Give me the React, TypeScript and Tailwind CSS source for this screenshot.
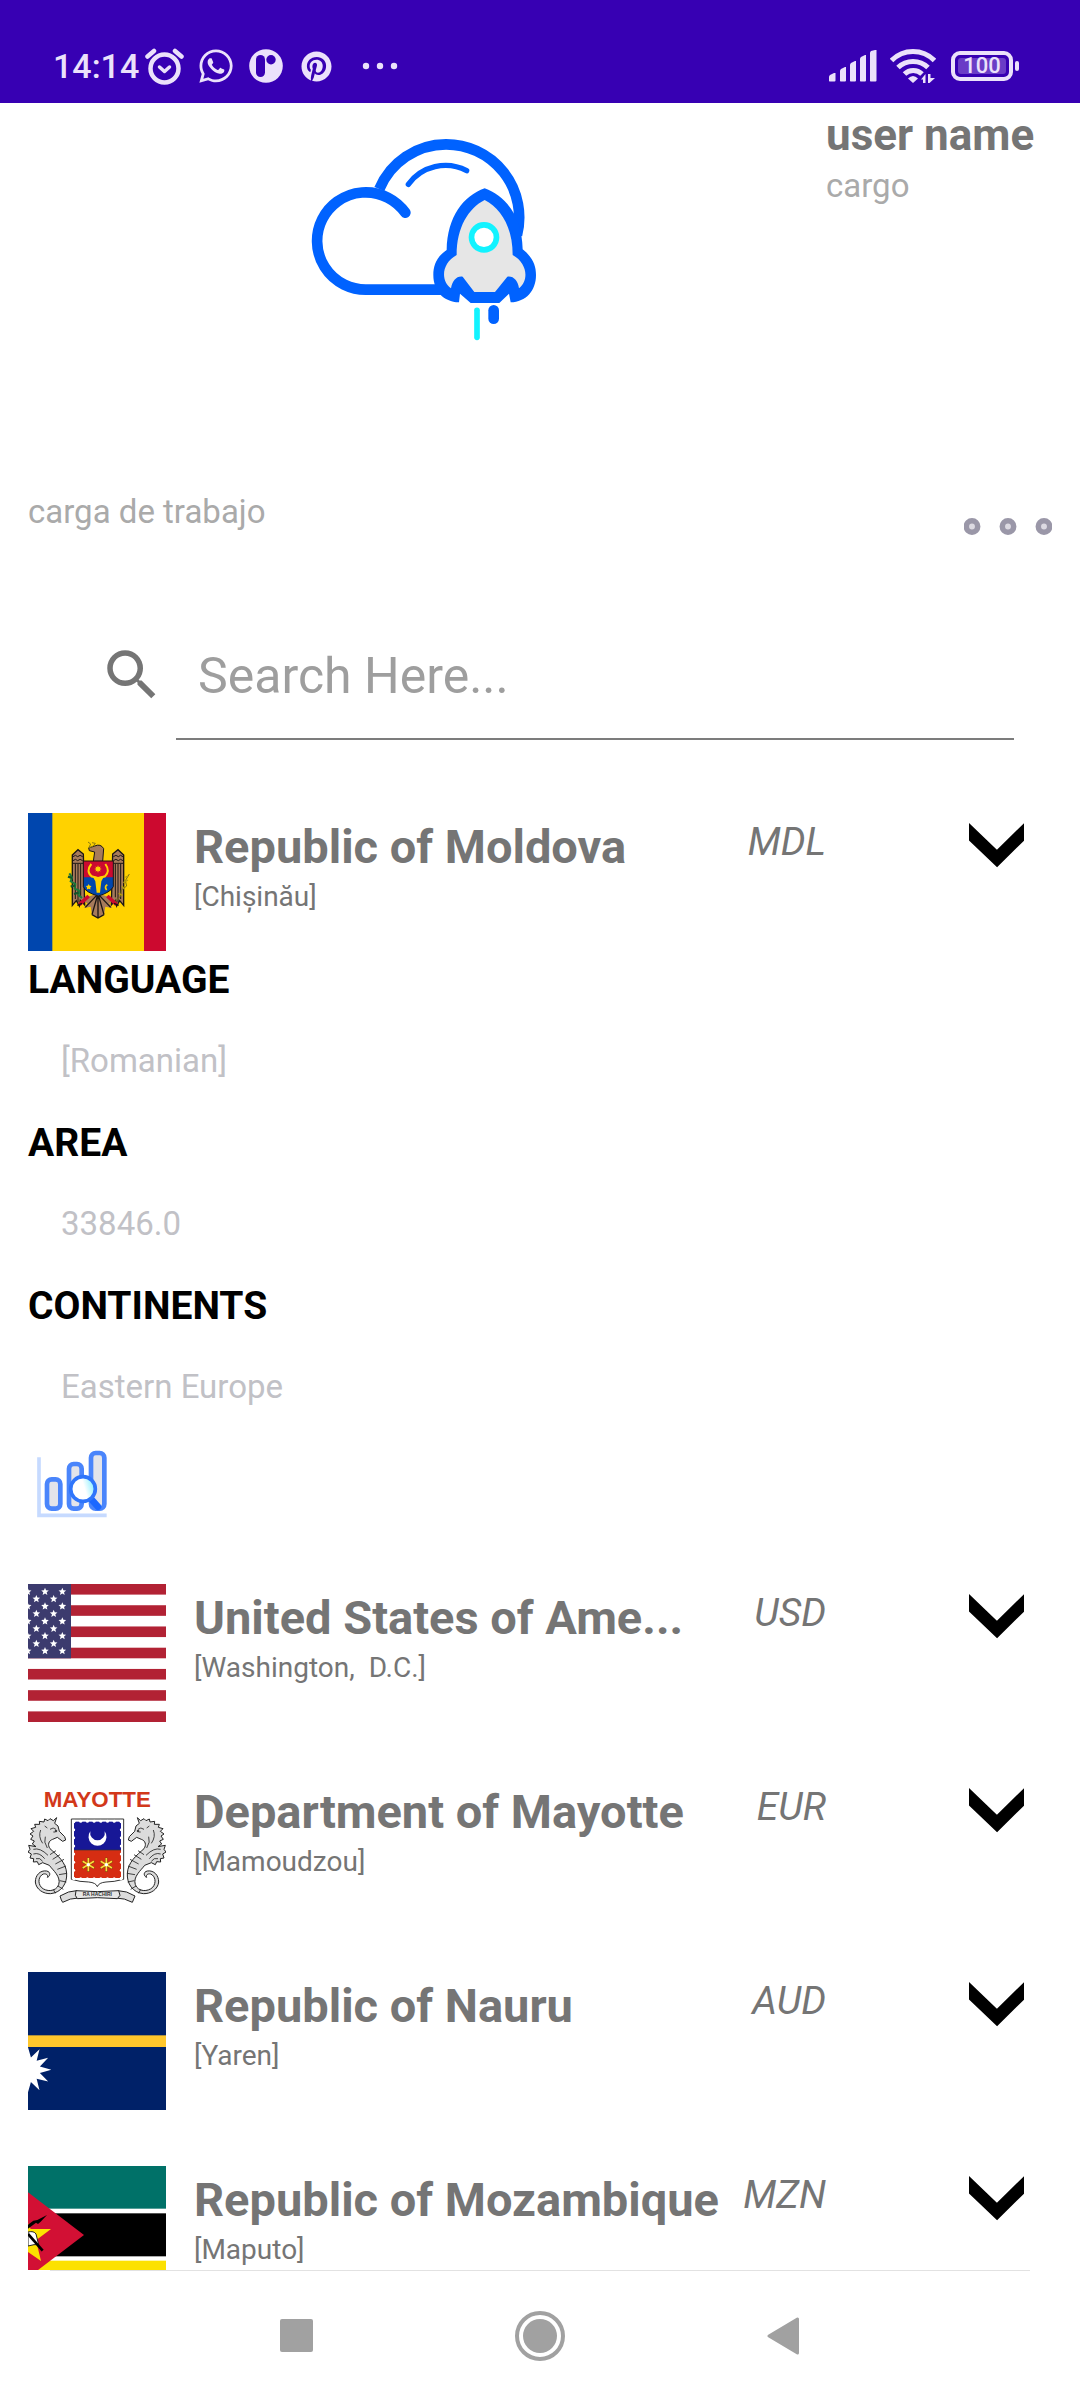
import React, { useState } from "react";
import { FaPinterest, FaWhatsapp } from "react-icons/fa";

const starPath = (cx: number, cy: number, outer: number, inner: number, points: number, startDeg = -90) => {
  const pts: string[] = [];
  for (let i = 0; i < points * 2; i++) {
    const r = i % 2 === 0 ? outer : inner;
    const a = ((startDeg + (i * 180) / points) * Math.PI) / 180;
    pts.push(`${(cx + r * Math.cos(a)).toFixed(1)} ${(cy + r * Math.sin(a)).toFixed(1)}`);
  }
  return `M${pts.join("L")}Z`;
};

function AlarmIcon() {
  return (
    <svg viewBox="0 0 39 37" className="h-[37px] w-[39px]" fill="none" stroke="currentColor" strokeLinecap="round" aria-hidden="true">
      <circle cx="19.500" cy="20.500" r="14" strokeWidth="4.500" />
      <path d="M2.500 8.500L9 3M36.500 8.500L30 3" strokeWidth="4.500" />
      <path d="M14.500 19l5 4.500 5-4.500" strokeWidth="3.500" strokeLinejoin="round" />
    </svg>
  );
}

function RoundAppIcon() {
  return (
    <svg viewBox="0 0 34 34" className="size-[34px]" aria-hidden="true">
      <circle cx="17" cy="17" r="16.800" fill="currentColor" />
      <rect x="7" y="6" width="9" height="22" rx="4.500" fill="#3700b3" />
      <circle cx="22" cy="10.800" r="4.700" fill="#3700b3" />
    </svg>
  );
}

function SignalIcon() {
  return (
    <svg viewBox="0 0 48 32" className="h-8 w-12" fill="currentColor" aria-hidden="true">
      <path d="M0 31V27q0-1 1-2L5 23h1.500v7.500q0 1-1 1H.5zM11 31V21q0-1 1-2l4-2h1v13.500q0 1-1 1h-4.500zM21 31V15q0-1 1-2l4-2h1v19.500q0 1-1 1h-4.500zM31 31V9q0-1 1-2l4-2h1v25.500q0 1-1 1h-4.500zM41 31V3q0-1 1-2l4-1h1.500v30.500q0 1-1 1h-5z" />
    </svg>
  );
}

function WifiIcon() {
  return (
    <svg viewBox="0 0 46 36" className="h-9 w-[46px]" fill="none" stroke="currentColor" strokeWidth="5" aria-hidden="true">
      <path d="M1.500 12.500a30 30 0 0 1 43 0" />
      <path d="M8 19.500a21.500 21.500 0 0 1 30 0" />
      <path d="M14.500 26a12.500 12.500 0 0 1 17.500 0" />
      <path d="M18 30.500q5-5 10 0l-5 4.500z" fill="currentColor" stroke="none" />
      <path d="M35.500 35v-9l-4.500 5.500h2V35zM38 35v-9h2.500v4h4.500L39.500 35z" fill="currentColor" stroke="none" />
    </svg>
  );
}

function Logo() {
  return (
    <svg viewBox="66 54 675 606" className="h-[202px] w-[225px] shrink-0 overflow-visible" fill="none" role="img" aria-label="Cloud rocket">
      <g stroke="#0062ff" strokeWidth="32">
        <path d="M268 207A217 217 0 0 1 468 73A219 219 0 0 1 681 345" />
        <path d="M450 509H230A146 146 0 1 1 346 278" strokeLinecap="round" />
        <path d="M355 193A138 138 0 0 1 530 152" strokeWidth="16" strokeLinecap="round" />
      </g>
      <path d="M584 205C520 228 472 290 470 390C440 410 430 436 430 465C430 512 460 546 507 547L510 521L542 549H628L657 521L662 547C708 546 738 512 738 465C738 436 728 412 698 388C696 290 648 228 584 205Z" fill="#0062ff" />
      <path d="M584 240C535 265 500 322 500 405C455 430 451 482 483 505C487 482 500 467 518 470L553 516H615L652 470C670 467 684 482 687 505C717 482 713 430 668 405C668 322 633 265 584 240Z" fill="#e6e6e6" />
      <circle cx="582" cy="352" r="37.500" fill="#fff" stroke="#12f3ff" strokeWidth="17" />
      <path d="M561 571V652" stroke="#12f3ff" strokeWidth="17" strokeLinecap="round" />
      <path d="M611 571V596" stroke="#0062ff" strokeWidth="32" strokeLinecap="round" />
    </svg>
  );
}

function ChartIcon() {
  return (
    <svg viewBox="108 90 216 204" className="h-[68px] w-[72px]" fill="none" aria-hidden="true">
      <defs>
        <linearGradient id="lens" x1="0" x2="1" y1="0.600" y2="0.300">
          <stop offset="0.550" stopColor="#fff" />
          <stop offset="1" stopColor="#7eeeff" />
        </linearGradient>
      </defs>
      <path d="M117 112V286H320" stroke="#c6daff" strokeWidth="11" />
      <g fill="#e3e4ea" stroke="#4a85fb" strokeWidth="14">
        <rect x="141" y="178" width="40" height="88" rx="14" />
        <rect x="207" y="132" width="38" height="134" rx="14" />
        <rect x="273" y="99" width="40" height="167" rx="14" />
      </g>
      <path d="M276 240L294 260" stroke="#1c68ff" strokeWidth="20" strokeLinecap="round" />
      <circle cx="249" cy="207" r="37" fill="url(#lens)" stroke="#2f75fb" strokeWidth="11" />
    </svg>
  );
}

const flagClass = "size-[138px] shrink-0";

function MoldovaFlag() {
  const wing = (
    <g>
      <path d="M217 195L234 179L250 192L254 345L241 330L238 348L229 332L217 346Z" fill="#a77b5b" stroke="#1c1714" strokeWidth="4" />
      <path d="M219 200q8-8 14 0 7-8 15 0M219 212q8-8 14 0 7-8 15 0M219 220h30M226 222v105M234 222v115M242 222v100" stroke="#1c1714" strokeWidth="3" fill="none" />
    </g>
  );
  return (
    <svg viewBox="84 69 414 414" className={flagClass} role="img" aria-label="Flag of Moldova">
      <rect x="84" y="69" width="414" height="414" fill="#ffd200" />
      <rect x="84" y="69" width="73" height="414" fill="#0046ae" />
      <rect x="432" y="69" width="66" height="414" fill="#cc092f" />
      {wing}
      <g transform="translate(588 0) scale(-1 1)">{wing}</g>
      <path d="M290 312L240 328L262 340L252 354L272 350L276 374L294 384L312 374L316 350L336 354L328 340L348 328L298 312Z" fill="#a77b5b" />
      <path d="M290 316L256 352M292 318L276 374M294 318V384M296 318L312 374M298 316L332 352M276 374L294 384L312 374" stroke="#1c1714" strokeWidth="4" fill="none" />
      <path d="M238 344L266 318M350 344L322 318" stroke="#cc092f" strokeWidth="11" />
      <path d="M232 346l14-6M356 346l-14-6" stroke="#1c1714" strokeWidth="4" />
      <path d="M280 214L284 186L268 182L266 174L284 168Q302 160 311 176L308 214Z" fill="#a77b5b" stroke="#1c1714" strokeWidth="3" />
      <path d="M264 156l8 6-6 12 14-6 6-8-10-2" stroke="#8a7a10" strokeWidth="3" fill="none" />
      <path d="M250 213H340V264H250Z" fill="#cc092f" />
      <path d="M250 262H340V290Q330 308 295 318Q258 308 250 290Z" fill="#0046ae" />
      <path d="M250 213H340V290Q330 308 295 318Q258 308 250 290Z" fill="none" stroke="#1c1714" strokeWidth="3" />
      <path d="M274 222Q256 244 276 260L294 264L314 260Q332 244 316 222" fill="none" stroke="#ffd200" strokeWidth="6" />
      <path d="M276 256L294 262L314 256L304 274L300 308H290L286 274Z" fill="#ffd200" />
      <path d={starPath(294, 237, 11, 6, 8)} fill="#ffd200" />
      <path d={starPath(266, 291, 9, 5, 5)} fill="#ffd200" />
      <path d="M322 284q-10 6-2 16" stroke="#ffd200" strokeWidth="5" fill="none" />
      <path d="M208 250l8 12-4 12 14 8-2 14 14 6-2 14 10 8" stroke="#1c7a3c" strokeWidth="6" fill="none" />
      <path d="M204 260l12 4M212 290l14-4M222 312l14-4" stroke="#14552b" strokeWidth="7" />
      <path d="M388 252L376 272L380 288L364 300L362 318L346 334" stroke="#7d7413" strokeWidth="3" fill="none" />
      <path d="M384 258l-8 4M384 270l-14 8M374 298l-8-10M368 316l-12-6" stroke="#b59d12" strokeWidth="4" />
    </svg>
  );
}

function UsaFlag() {
  const wide = [94, 138, 183, 227, 272];
  const narrow = [116, 160, 205, 250];
  return (
    <svg viewBox="84 72 414 414" className={flagClass} role="img" aria-label="Flag of the United States">
      <rect x="84" y="72" width="414" height="414" fill="#fff" />
      {[0, 1, 2, 3, 4, 5, 6].map((i) => (
        <rect key={i} x="84" y={72 + i * 63.7} width="414" height="31.800" fill="#b22234" />
      ))}
      <rect x="84" y="72" width="129" height="223" fill="#3c3b6e" />
      {wide.map((y) => [83, 135, 187].map((x) => <path key={`${x}-${y}`} d={starPath(x, y + 1, 12, 5.4, 5)} fill="#fff" />))}
      {narrow.map((y) => [109, 161].map((x) => <path key={`${x}-${y}`} d={starPath(x, y + 1, 12, 5.4, 5)} fill="#fff" />))}
    </svg>
  );
}

function MayotteFlag() {
  const seahorse = (
    <g stroke="#222" strokeLinejoin="round">
      <path
        d="M170 143L160 152L150 146L144 152L134 147L132 156L118 154L119 163L104 163L107 172L93 176L101 184L90 192L99 198L92 208L103 213L97 222L108 230L86 226L90 238L84 246L94 252L90 264L101 266L100 276L112 275L116 284L128 278L148 286C158 300 184 320 176 344C168 366 138 366 124 352C112 338 116 318 130 312C140 310 145 316 142 322C150 320 154 306 140 303C120 300 106 316 106 336C108 358 130 372 152 371C184 368 202 340 200 310C198 276 172 256 150 236C142 224 146 212 158 208L172 202L188 214L197 210L194 200L178 184L174 168L164 160Z"
        fill="#dcdcdc"
        strokeWidth="3"
      />
      <path d="M150 178q10-8 18 0M160 186h6M134 168l8 6M122 180q-8 20 6 40M136 200q-6 16 6 34M100 238q20-6 44 18M100 252q18-6 34 14M108 266q12-4 20 8M150 254l18-12M158 268l22-14M166 282l26-14M172 298l26-10M177 314l24-4M179 332l20 4M174 348l16 10M160 358l6 12" fill="none" strokeWidth="2.500" />
      <circle cx="168" cy="183" r="3" fill="#222" />
    </g>
  );
  const scallops = [0, 1, 2, 3, 4, 5, 6, 7];
  return (
    <svg viewBox="84 24 414 414" className={flagClass} role="img" aria-label="Flag of Mayotte">
      <rect x="84" y="24" width="414" height="414" fill="#fff" />
      <text x="292" y="110" textAnchor="middle" fontFamily="Liberation Sans, Arial, sans-serif" fontWeight="700" fontSize="67" fill="#d2381a">
        MAYOTTE
      </text>
      {seahorse}
      <g transform="translate(582 0) scale(-1 1)">{seahorse}</g>
      <path d="M214 147H371V328Q340 336 318 336Q296 338 292 350Q288 338 266 336Q240 336 214 328Z" fill="#fff" stroke="#333" strokeWidth="3" />
      <rect x="222" y="155" width="141" height="85" fill="#171796" />
      <rect x="222" y="240" width="141" height="84" fill="#d62d12" />
      <path d="M222 240H363" stroke="#333" strokeWidth="2" />
      {scallops.map((i) => (
        <g key={i} fill="#fff">
          <circle cx={222 + i * 20.1} cy="154" r="4.500" />
          <circle cx={222 + i * 20.1} cy="326" r="4.500" />
          <circle cx="221" cy={155 + i * 24.3} r="4.500" />
          <circle cx="364" cy={155 + i * 24.3} r="4.500" />
        </g>
      ))}
      <path d="M271 184A27 27 0 1 0 314 184A22 22 0 1 1 271 184Z" fill="#fff" />
      {[265, 319].map((x) => (
        <g key={x}>
          <path d="M0-21V21M-18-10.500L18 10.500M-18 10.500L18-10.500" transform={`translate(${x} 284)`} stroke="#6b4a08" strokeWidth="7" />
          <path d="M0-20V20M-17-10L17 10M-17 10L17-10" transform={`translate(${x} 284)`} stroke="#ffd83a" strokeWidth="5" />
          <circle cx={x} cy="284" r="5" fill="#fff" />
        </g>
      ))}
      <path d="M180 378Q206 362 230 362L236 384Q210 384 188 397L184 390ZM405 378Q380 362 354 362L348 384Q374 384 397 397L400 390Z" fill="#dcdcdc" stroke="#222" strokeWidth="3" />
      <path d="M228 362Q292 368 356 362L360 376L352 386Q292 380 232 386L226 376Z" fill="#e6e6e6" stroke="#222" strokeWidth="3" />
      <text x="292" y="379" textAnchor="middle" fontFamily="Liberation Sans, Arial, sans-serif" fontSize="15" fontWeight="700" fill="#333">
        RA HACHIRI
      </text>
    </svg>
  );
}

function NauruFlag() {
  return (
    <svg viewBox="84 66 414 414" className={flagClass} role="img" aria-label="Flag of Nauru">
      <rect x="84" y="66" width="414" height="414" fill="#002168" />
      <rect x="84" y="256" width="414" height="35" fill="#ffc72c" />
      <path d={starPath(83, 359, 71, 38, 12)} fill="#fff" />
    </svg>
  );
}

function MozambiqueFlag() {
  return (
    <svg viewBox="84 648 414 414" className={flagClass} role="img" aria-label="Flag of Mozambique">
      <rect x="84" y="648" width="414" height="414" fill="#fff" />
      <rect x="84" y="648" width="414" height="128" fill="#007168" />
      <rect x="84" y="790" width="414" height="129" fill="#000" />
      <rect x="84" y="932" width="414" height="130" fill="#fce100" />
      <path d="M84 727L252 855L84 983Z" fill="#d21034" />
      <path d="M84 820L92 837H153L108 871L123 933L84 906Z" fill="#fce100" />
      <path d="M84 846Q102 842 108 852L116 884Q104 882 84 888Z" fill="#fff" stroke="#222" strokeWidth="3" />
      <path d="M84 852L128 902" stroke="#000" strokeWidth="8" />
      <path d="M84 824L100 812L112 810L141 795L122 815L114 822L108 818L84 836Z" fill="#000" />
    </svg>
  );
}

type Country = { name: string; capital: string; currency: string; Flag: () => React.JSX.Element };

const countries: Country[] = [
  { name: "Republic of Moldova", capital: "[Chișinău]", currency: "MDL", Flag: MoldovaFlag },
  { name: "United States of Ame...", capital: "[Washington,  D.C.]", currency: "USD", Flag: UsaFlag },
  { name: "Department of Mayotte", capital: "[Mamoudzou]", currency: "EUR", Flag: MayotteFlag },
  { name: "Republic of Nauru", capital: "[Yaren]", currency: "AUD", Flag: NauruFlag },
  { name: "Republic of Mozambique", capital: "[Maputo]", currency: "MZN", Flag: MozambiqueFlag },
];

const details = [
  { label: "LANGUAGE", value: "[Romanian]" },
  { label: "AREA", value: "33846.0" },
  { label: "CONTINENTS", value: "Eastern Europe" },
];

function StatusBar() {
  return (
    <div className="flex h-[103px] shrink-0 items-end justify-between bg-[#3700b3] pr-[61px] pb-[18px] pl-[53px] text-[#ebe1fb]">
      <div className="flex h-[38px] items-center">
        <span className="w-[92px] text-[34px] leading-[38px] font-medium">14:14</span>
        <AlarmIcon />
        <FaWhatsapp className="ml-[13px] size-[38px]" />
        <span className="ml-3.5">
          <RoundAppIcon />
        </span>
        <FaPinterest className="ml-[18px] size-[31px]" />
        <svg viewBox="0 0 36 8" className="ml-[30px] h-2 w-9" fill="currentColor" aria-hidden="true">
          <circle cx="4" cy="4" r="3.200" />
          <circle cx="18" cy="4" r="3.200" />
          <circle cx="32" cy="4" r="3.200" />
        </svg>
      </div>
      <div className="flex h-[38px] items-center">
        <SignalIcon />
        <span className="ml-[13px]">
          <WifiIcon />
        </span>
        <span className="ml-[15px] flex h-[30px] w-[62px] items-center rounded-[9px] border-4 border-current p-[3px]">
          <span className="flex h-4 w-full items-center justify-center rounded-[3px] bg-[#6a3cc6] text-[22px] leading-4 font-medium">100</span>
        </span>
        <span className="ml-0.5 h-2.5 w-1 rounded-[2px] bg-current" />
      </div>
    </div>
  );
}

function CountryRow({ country, open, onToggle }: { country: Country; open: boolean; onToggle: () => void }) {
  const { Flag } = country;
  return (
    <div className="flex items-start pr-14 pl-7">
      <Flag />
      <div className="ml-7 min-w-0 flex-1 pt-[7px]">
        <h2 className="text-[47px] leading-[54px] font-bold whitespace-nowrap">{country.name}</h2>
        <p className="mt-1.5 text-[28px] leading-[34px] whitespace-pre">{country.capital}</p>
      </div>
      <span className="pt-1.5 text-[39px] leading-[46px] italic">{country.currency}</span>
      <button type="button" onClick={onToggle} aria-expanded={open} aria-label={`Details of ${country.name}`} className="mt-2 ml-[143px] shrink-0">
        <svg viewBox="0 0 55 48" className="h-12 w-[55px]" aria-hidden="true">
          <path d="M-6 5L28 37.500L61 5" fill="none" stroke="#000" strokeWidth="12.500" />
        </svg>
      </button>
    </div>
  );
}

function CountryDetails() {
  return (
    <div className="pt-1.5 pb-2.5 pl-7">
      <dl>
        {details.map((d) => (
          <div key={d.label} className="mb-[39px]">
            <dt className="text-[39px] leading-[46px] font-bold text-black">{d.label}</dt>
            <dd className="mt-[38px] ml-[33px] text-[33px] leading-10 text-[#c1c1c6]">{d.value}</dd>
          </div>
        ))}
      </dl>
      <button type="button" aria-label="Statistics" className="mt-[43px] ml-2 block">
        <ChartIcon />
      </button>
    </div>
  );
}

export default function App() {
  const [openIndex, setOpenIndex] = useState<number | null>(0);
  const [query, setQuery] = useState("");
  return (
    <div className="flex h-screen flex-col overflow-hidden bg-white font-[Roboto,sans-serif] text-[#757575]">
      <StatusBar />
      <header className="flex items-start justify-between pt-1.5 pr-11">
        <div className="flex flex-1 justify-center pt-[29px] pl-[22px]">
          <Logo />
        </div>
        <div className="w-[210px]">
          <h1 className="text-[44px] leading-[52px] font-bold whitespace-nowrap">user name</h1>
          <p className="mt-[5px] text-[33px] leading-10 text-[#aaa]">cargo</p>
        </div>
      </header>

      <div className="mt-[152px] flex items-start justify-between px-7">
        <p className="text-[33px] leading-10 text-[#aaa]">carga de trabajo</p>
        <button type="button" aria-label="More options" className="mt-[26px]">
          <svg viewBox="0 0 88 17" className="h-[17px] w-[88px]" fill="#dcdae2" stroke="#9a97a8" strokeWidth="5.500" aria-hidden="true">
            <circle cx="8" cy="8.500" r="5.700" />
            <circle cx="44" cy="8.500" r="5.700" />
            <circle cx="80" cy="8.500" r="5.700" />
          </svg>
        </button>
      </div>

      <label className="mt-[107px] mr-[66px] ml-[99px] flex items-start">
        <svg viewBox="0 0 24 24" className="size-[66px] shrink-0" fill="#757575" aria-hidden="true">
          <path d="M15.5 14h-.79l-.28-.27A6.471 6.471 0 0 0 16 9.500 6.500 6.500 0 1 0 9.500 16c1.610 0 3.090-.59 4.230-1.570l.27.28v.79l5 4.990L20.490 19l-4.990-5zm-6 0C7.010 14 5 11.990 5 9.500S7.010 5 9.500 5 14 7.010 14 9.500 11.990 14 9.500 14z" />
        </svg>
        <input
          type="text"
          value={query}
          onChange={(e) => setQuery(e.target.value)}
          aria-label="Search"
          placeholder="Search Here..."
          className="ml-[11px] h-[98px] min-w-0 flex-1 border-b-2 border-[#7c7c7c] pt-0.5 pb-[30px] pl-[22px] text-[50px] leading-[64px] outline-none placeholder:text-[#9e9e9e]"
        />
      </label>

      <ul className="mt-[73px] flex min-h-0 flex-1 flex-col gap-14 overflow-hidden">
        {countries.map((c, i) => (
          <li key={c.name} className="shrink-0">
            <CountryRow country={c} open={openIndex === i} onToggle={() => setOpenIndex(openIndex === i ? null : i)} />
            {openIndex === i && <CountryDetails />}
          </li>
        ))}
      </ul>

      <nav className="shrink-0">
        <div className="mx-[50px] h-px bg-[#e2e2e2]" />
        <div className="flex h-[129px] items-center justify-center gap-[202px]">
          <button type="button" aria-label="Recent apps">
            <span className="block size-[33px] rounded-[2px] bg-[#a1a1a1]" />
          </button>
          <button type="button" aria-label="Home">
            <span className="flex size-[50px] items-center justify-center rounded-full border-4 border-[#a1a1a1]">
              <span className="size-[34px] rounded-full bg-[#a1a1a1]" />
            </span>
          </button>
          <button type="button" aria-label="Back">
            <svg viewBox="0 0 33 38" className="h-[38px] w-[33px]" aria-hidden="true">
              <path d="M2 19L30.500 2V36Z" fill="#a1a1a1" stroke="#a1a1a1" strokeWidth="3" strokeLinejoin="round" />
            </svg>
          </button>
        </div>
      </nav>
    </div>
  );
}
